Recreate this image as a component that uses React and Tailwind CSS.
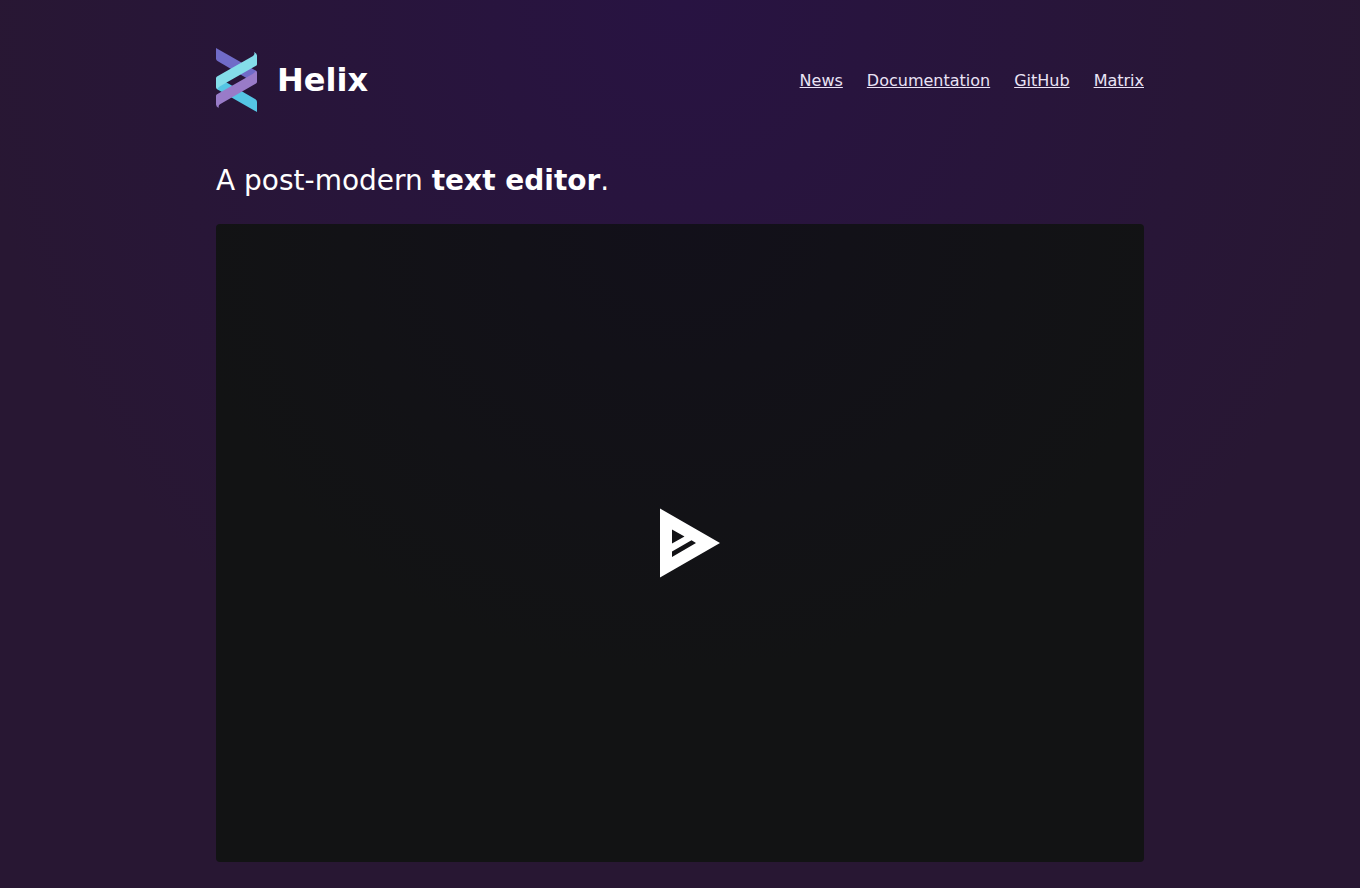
const links = [
  { label: "News", href: "#news" },
  { label: "Documentation", href: "#documentation" },
  { label: "GitHub", href: "#github" },
  { label: "Matrix", href: "#matrix" },
];

function HelixLogo() {
  return (
    <svg viewBox="0 0 41 64" className="h-16 w-[41px]" aria-hidden="true">
      <path fill="#706bc8" d="M0 0 L39.5 22.6 Q41 23.5 41 25 V31 L38 34.5 L1.5 13 Q0 12 0 10.5 Z" />
      <path fill="#55c5e4" d="M0 36 L8 33 L39.5 51.3 Q41 52.2 41 54 V64 L1.5 41.4 Q0 40.5 0 39 Z" />
      <path fill="#84ddea" d="M38.3 4 Q41 5.5 41 7.5 V16.2 Q41 17.2 40 17.8 L4 38.2 Q1.5 39.5 1.5 41.2 Q0 40.5 0 38.5 V30.5 Q0 29.2 1 28.6 L37 8 Q39 6.8 38.3 4 Z" />
      <path fill="#997bc8" d="M39.5 22.6 Q41 23.5 41 25 V33.8 Q41 35 40 35.6 L4 56.2 Q2.2 57.3 2.7 60 Q0 58.5 0 56.5 V47.8 Q0 46.8 1 46.2 L37 25.8 Q39.5 24.4 39.5 22.6 Z" />
    </svg>
  );
}

export default function App() {
  return (
    <div className="min-h-screen bg-[#281733] bg-[radial-gradient(ellipse_52%_88vh_at_top,#281342,#281733)] font-['DejaVu_Sans',sans-serif] text-white">
      <div className="mx-auto max-w-[976px] px-6 pt-12 pb-[26px]">
        <header className="flex flex-wrap items-center justify-between gap-6">
          <div className="flex items-center gap-5">
            <HelixLogo />
            <h1 className="text-[32px] leading-10 font-bold">Helix</h1>
          </div>
          <nav className="flex flex-wrap gap-6 pt-0.5 text-base text-[#eae3f5]">
            {links.map((link) => (
              <a key={link.label} href={link.href} className="underline">
                {link.label}
              </a>
            ))}
          </nav>
        </header>
        <main>
          <h2 className="mt-12 text-[28px] leading-[42px]">
            A post-modern <strong className="font-bold">text editor</strong>.
          </h2>
          <button
            type="button"
            aria-label="Play demo"
            className="mt-[22px] flex aspect-[928/638] w-full items-center justify-center rounded bg-[#121314] bg-[radial-gradient(ellipse_500px_450px_at_top,#12101a,#121314)]"
          >
            <svg viewBox="0 0 60 70" className="ml-5 h-[70px] w-[60px]" aria-hidden="true">
              <path fill="#fff" fillRule="evenodd" d="M0 0.5 L60 35 L0 69.5 Z M12 21.5 V35.5 L24.5 28.5 Z M12 43.5 V49 L36 35 L31.5 32.3 Z" />
            </svg>
          </button>
        </main>
      </div>
    </div>
  );
}
